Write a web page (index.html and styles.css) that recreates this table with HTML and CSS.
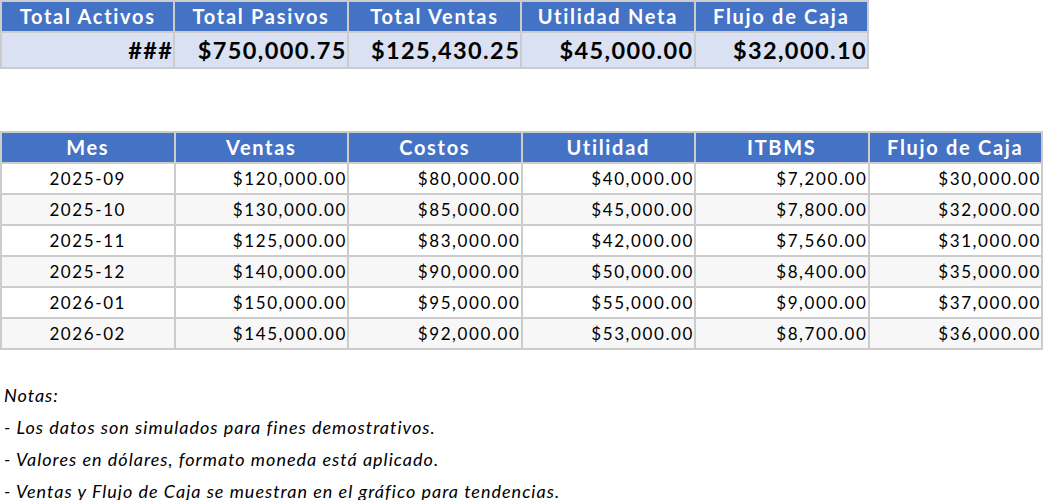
FILE: index.html
```html
<!DOCTYPE html>
<html lang="es">
<head>
<meta charset="utf-8">
<link rel="stylesheet" href="styles.css">
</head>
<body>
<table class="grid summary">
  <colgroup><col class="c"><col class="c"><col class="c"><col class="c"><col class="c"></colgroup>
  <tr class="head">
    <th>Total Activos</th><th>Total Pasivos</th><th>Total Ventas</th><th>Utilidad Neta</th><th>Flujo de Caja</th>
  </tr>
  <tr class="totals">
    <td>###</td><td>$750,000.75</td><td>$125,430.25</td><td>$45,000.00</td><td>$32,000.10</td>
  </tr>
</table>

<table class="grid data">
  <colgroup><col class="c"><col class="c"><col class="c"><col class="c"><col class="c"><col class="c"></colgroup>
  <tr class="head">
    <th>Mes</th><th>Ventas</th><th>Costos</th><th>Utilidad</th><th>ITBMS</th><th>Flujo de Caja</th>
  </tr>
  <tr><td class="mes">2025-09</td><td>$120,000.00</td><td>$80,000.00</td><td>$40,000.00</td><td>$7,200.00</td><td>$30,000.00</td></tr>
  <tr class="alt"><td class="mes">2025-10</td><td>$130,000.00</td><td>$85,000.00</td><td>$45,000.00</td><td>$7,800.00</td><td>$32,000.00</td></tr>
  <tr><td class="mes">2025-11</td><td>$125,000.00</td><td>$83,000.00</td><td>$42,000.00</td><td>$7,560.00</td><td>$31,000.00</td></tr>
  <tr class="alt"><td class="mes">2025-12</td><td>$140,000.00</td><td>$90,000.00</td><td>$50,000.00</td><td>$8,400.00</td><td>$35,000.00</td></tr>
  <tr><td class="mes">2026-01</td><td>$150,000.00</td><td>$95,000.00</td><td>$55,000.00</td><td>$9,000.00</td><td>$37,000.00</td></tr>
  <tr class="alt"><td class="mes">2026-02</td><td>$145,000.00</td><td>$92,000.00</td><td>$53,000.00</td><td>$8,700.00</td><td>$36,000.00</td></tr>
</table>

<div class="notes">
  <p>Notas:</p>
  <p>- Los datos son simulados para fines demostrativos.</p>
  <p>- Valores en dólares, formato moneda está aplicado.</p>
  <p>- Ventas y Flujo de Caja se muestran en el gráfico para tendencias.</p>
</div>
</body>
</html>
```

FILE: styles.css
```css
html, body {
  margin: 0;
  padding: 0;
  background: #ffffff;
}
body {
  font-family: Lato, "Liberation Sans", sans-serif;
  color: #000;
}
.grid {
  border-collapse: collapse;
  table-layout: fixed;
}
.grid th, .grid td {
  border: 2px solid #cccccc;
  padding: 0;
  white-space: nowrap;
  overflow: hidden;
}
.head th {
  background: #4472c4;
  color: #ffffff;
  font-weight: 700;
  font-size: 20px;
  letter-spacing: 1.7px;
  text-align: center;
  height: 29px;
  line-height: 29px;
}
.summary {
  width: 869px;
}
.totals td {
  background: #d9e1f2;
  font-weight: 700;
  font-size: 23.5px;
  letter-spacing: 1.4px;
  text-align: right;
  height: 34px;
  line-height: 34px;
}
.data {
  width: 1043px;
  margin-top: 62px;
}
.data td {
  font-size: 17px;
  letter-spacing: 1.6px;
  text-align: right;
  height: 29px;
  line-height: 29px;
  background: #ffffff;
}
.data tr.alt td {
  background: #f7f7f7;
}
.data td.mes {
  text-align: center;
}
.notes {
  margin-top: 29px;
  padding-left: 4px;
  font-style: italic;
  font-size: 18px;
  letter-spacing: 1px;
}
.notes p {
  margin: 0;
  line-height: 32px;
}
```
